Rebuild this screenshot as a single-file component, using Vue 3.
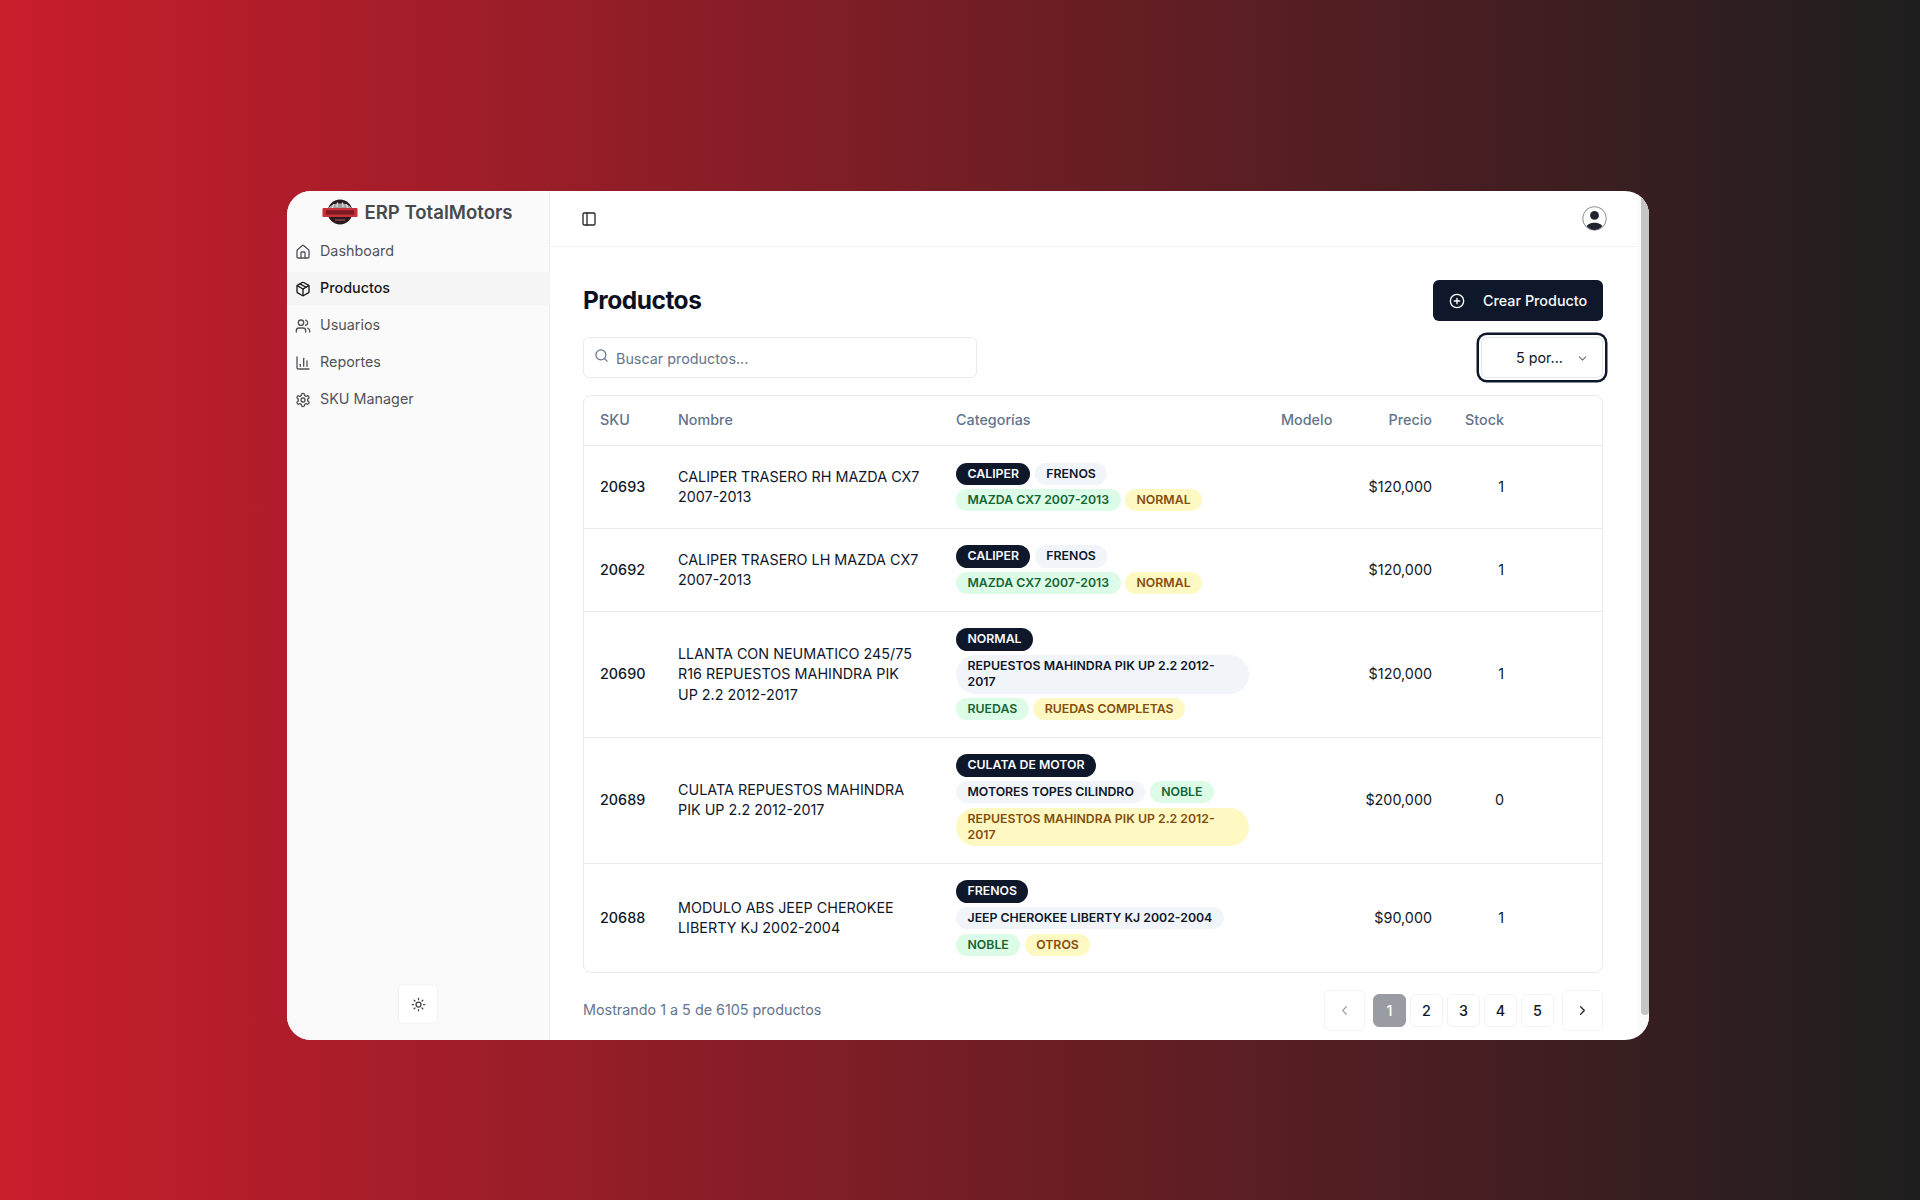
<template>
  <div class="page">
    <div class="window">
      <aside class="sidebar">
        <div class="brand">
          <svg class="logo" viewBox="0 0 36 26" width="36" height="26">
            <circle cx="18" cy="13" r="12.5" fill="#2a1a1d" />
            <path d="M6 10 C8 2.5 28 2.5 30 10 Z" fill="#a2a2a2" />
            <path d="M10 9 L12 5 M15 8 L15.5 3.5 M21 8 L20.5 3.5 M26 9 L24 5" stroke="#e4e4e4" stroke-width="1.2" />
            <rect x="0.5" y="9" width="35" height="9" rx="1" fill="#c8303a" />
            <rect x="4" y="11.2" width="28" height="4.4" fill="#7d1a22" />
            <path d="M13 21 H23" stroke="#8a4a50" stroke-width="1.4" />
          </svg>
          <span>ERP TotalMotors</span>
        </div>
        <nav class="nav">
          <a v-for="item in navItems" :key="item.label" class="nav-item" :class="{ active: item.active }">
            <svg viewBox="0 0 24 24" class="nav-icon" v-html="item.icon"></svg>
            <span>{{ item.label }}</span>
          </a>
        </nav>
        <button class="theme-btn">
          <svg viewBox="0 0 24 24" width="15" height="15" class="line">
            <circle cx="12" cy="12" r="4" />
            <path d="M12 2v2M12 20v2M4.93 4.93l1.41 1.41M17.66 17.66l1.41 1.41M2 12h2M20 12h2M6.34 17.66l-1.41 1.41M19.07 4.93l-1.41 1.41" />
          </svg>
        </button>
      </aside>

      <main class="main">
        <header class="topbar">
          <svg viewBox="0 0 24 24" width="16" height="16" class="line dark">
            <rect x="3" y="3" width="18" height="18" rx="2" />
            <path d="M9 3v18" />
          </svg>
          <svg viewBox="0 0 24 24" width="25" height="25" class="avatar">
            <circle cx="12" cy="12" r="11.2" fill="#fff" stroke="#8b8f96" stroke-width="1" />
            <circle cx="12" cy="9" r="4.2" fill="#1f2430" />
            <path d="M4.6 19.5 C6 14.8 18 14.8 19.4 19.5 C17.5 21.8 15 23 12 23 C9 23 6.5 21.8 4.6 19.5 Z" fill="#1f2430" />
          </svg>
        </header>

        <section class="content">
          <div class="title-row">
            <h1>Productos</h1>
            <button class="create-btn">
              <svg viewBox="0 0 24 24" width="16" height="16" class="line white">
                <circle cx="12" cy="12" r="10" />
                <path d="M8 12h8M12 8v8" />
              </svg>
              <span>Crear Producto</span>
            </button>
          </div>

          <div class="filter-row">
            <label class="search">
              <svg viewBox="0 0 24 24" width="15" height="15" class="line muted">
                <circle cx="11" cy="11" r="8" />
                <path d="m21 21-4.3-4.3" />
              </svg>
              <span>Buscar productos...</span>
            </label>
            <div class="select">
              <span>5 por...</span>
              <svg viewBox="0 0 24 24" width="13" height="13" class="line muted">
                <path d="m6 9 6 6 6-6" />
              </svg>
            </div>
          </div>

          <div class="table-wrap">
            <table>
              <colgroup>
                <col style="width: 78px" />
                <col style="width: 278px" />
                <col style="width: 325px" />
                <col style="width: 83px" />
                <col style="width: 100px" />
                <col style="width: 72px" />
                <col />
              </colgroup>
              <thead>
                <tr>
                  <th>SKU</th>
                  <th>Nombre</th>
                  <th>Categorías</th>
                  <th>Modelo</th>
                  <th class="right">Precio</th>
                  <th class="right">Stock</th>
                  <th></th>
                </tr>
              </thead>
              <tbody>
                <tr v-for="p in products" :key="p.sku">
                  <td class="sku">{{ p.sku }}</td>
                  <td class="name">{{ p.name }}</td>
                  <td>
                    <div class="badges">
                      <span v-for="(b, i) in p.tags" :key="i" class="badge" :class="badgeTone[i]">{{ b }}</span>
                    </div>
                  </td>
                  <td></td>
                  <td class="right">{{ p.price }}</td>
                  <td class="right">{{ p.stock }}</td>
                  <td></td>
                </tr>
              </tbody>
            </table>
          </div>

          <div class="footer-row">
            <span class="count">Mostrando 1 a 5 de 6105 productos</span>
            <div class="pager">
              <button class="arrow off">
                <svg viewBox="0 0 24 24" width="15" height="15" class="line"><path d="m15 18-6-6 6-6" /></svg>
              </button>
              <div class="pages">
                <button v-for="n in 5" :key="n" class="page-num" :class="{ current: n === 1 }">{{ n }}</button>
              </div>
              <button class="arrow">
                <svg viewBox="0 0 24 24" width="15" height="15" class="line dark"><path d="m9 18 6-6-6-6" /></svg>
              </button>
            </div>
          </div>
        </section>
      </main>

      <div class="scrollbar"><div class="thumb"></div></div>
    </div>
  </div>
</template>

<script setup>
const navItems = [
  {
    label: 'Dashboard',
    icon: '<path d="M3 10a2 2 0 0 1 .7-1.5l7-6a2 2 0 0 1 2.6 0l7 6A2 2 0 0 1 21 10v9a2 2 0 0 1-2 2H5a2 2 0 0 1-2-2z"/><path d="M15 21v-8a1 1 0 0 0-1-1h-4a1 1 0 0 0-1 1v8"/>'
  },
  {
    label: 'Productos',
    active: true,
    icon: '<path d="M11 21.7a2 2 0 0 0 2 0l7-4A2 2 0 0 0 21 16V8a2 2 0 0 0-1-1.7l-7-4a2 2 0 0 0-2 0l-7 4A2 2 0 0 0 3 8v8a2 2 0 0 0 1 1.7z"/><path d="M12 22V12"/><path d="M3.3 7 12 12l8.7-5"/><path d="m7.5 4.3 9 5.1"/>'
  },
  {
    label: 'Usuarios',
    icon: '<path d="M16 21v-2a4 4 0 0 0-4-4H6a4 4 0 0 0-4 4v2"/><circle cx="9" cy="7" r="4"/><path d="M22 21v-2a4 4 0 0 0-3-3.87"/><path d="M16 3.13a4 4 0 0 1 0 7.75"/>'
  },
  {
    label: 'Reportes',
    icon: '<path d="M3 3v16a2 2 0 0 0 2 2h16"/><path d="M8 17v-3"/><path d="M13 17V5"/><path d="M18 17V9"/>'
  },
  {
    label: 'SKU Manager',
    icon: '<path d="M12.22 2h-.44a2 2 0 0 0-2 2v.18a2 2 0 0 1-1 1.73l-.43.25a2 2 0 0 1-2 0l-.15-.08a2 2 0 0 0-2.73.73l-.22.38a2 2 0 0 0 .73 2.73l.15.1a2 2 0 0 1 1 1.72v.51a2 2 0 0 1-1 1.74l-.15.09a2 2 0 0 0-.73 2.73l.22.38a2 2 0 0 0 2.73.73l.15-.08a2 2 0 0 1 2 0l.43.25a2 2 0 0 1 1 1.73V20a2 2 0 0 0 2 2h.44a2 2 0 0 0 2-2v-.18a2 2 0 0 1 1-1.73l.43-.25a2 2 0 0 1 2 0l.15.08a2 2 0 0 0 2.73-.73l.22-.39a2 2 0 0 0-.73-2.73l-.15-.08a2 2 0 0 1-1-1.74v-.5a2 2 0 0 1 1-1.74l.15-.09a2 2 0 0 0 .73-2.73l-.22-.38a2 2 0 0 0-2.73-.73l-.15.08a2 2 0 0 1-2 0l-.43-.25a2 2 0 0 1-1-1.73V4a2 2 0 0 0-2-2z"/><circle cx="12" cy="12" r="3"/>'
  }
]

// order of colours is the same for every row
const badgeTone = ['dark', 'gray', 'green', 'yellow']

const products = [
  {
    sku: '20693',
    name: 'CALIPER TRASERO RH MAZDA CX7 2007-2013',
    tags: ['CALIPER', 'FRENOS', 'MAZDA CX7 2007-2013', 'NORMAL'],
    price: '$120,000',
    stock: 1
  },
  {
    sku: '20692',
    name: 'CALIPER TRASERO LH MAZDA CX7 2007-2013',
    tags: ['CALIPER', 'FRENOS', 'MAZDA CX7 2007-2013', 'NORMAL'],
    price: '$120,000',
    stock: 1
  },
  {
    sku: '20690',
    name: 'LLANTA CON NEUMATICO 245/75 R16 REPUESTOS MAHINDRA PIK UP 2.2 2012-2017',
    tags: ['NORMAL', 'REPUESTOS MAHINDRA PIK UP 2.2 2012-2017', 'RUEDAS', 'RUEDAS COMPLETAS'],
    price: '$120,000',
    stock: 1
  },
  {
    sku: '20689',
    name: 'CULATA REPUESTOS MAHINDRA PIK UP 2.2 2012-2017',
    tags: ['CULATA DE MOTOR', 'MOTORES TOPES CILINDRO', 'NOBLE', 'REPUESTOS MAHINDRA PIK UP 2.2 2012-2017'],
    price: '$200,000',
    stock: 0
  },
  {
    sku: '20688',
    name: 'MODULO ABS JEEP CHEROKEE LIBERTY KJ 2002-2004',
    tags: ['FRENOS', 'JEEP CHEROKEE LIBERTY KJ 2002-2004', 'NOBLE', 'OTROS'],
    price: '$90,000',
    stock: 1
  }
]
</script>

<style scoped>
.page {
  box-sizing: border-box;
  width: 1920px;
  height: 1200px;
  padding: 191px 0 0 287px;
  background: linear-gradient(to right, #c91d2c 0%, #1e1e1e 100%);
  font-family: Inter, "Liberation Sans", sans-serif;
  font-size: 14.35px;
  line-height: 20.4px;
  color: #0f172a;
  overflow: hidden;
}

.window {
  display: flex;
  width: 1362px;
  height: 849px;
  border-radius: 24px;
  overflow: hidden;
  background: #fff;
}

/* sidebar */
.sidebar {
  box-sizing: border-box;
  flex: none;
  width: 263px;
  display: flex;
  flex-direction: column;
  background: #fafafa;
  border-right: 1px solid #f0f1f3;
}

.brand {
  display: flex;
  align-items: center;
  justify-content: center;
  gap: 6px;
  height: 42px;
  padding-right: 1px;
  font-size: 18.6px;
  font-weight: 600;
  color: #47494f;
}

.logo {
  flex: none;
}

.nav {
  display: flex;
  flex-direction: column;
  flex: 1;
}

.nav-item {
  display: flex;
  align-items: center;
  gap: 9px;
  height: 37px;
  padding-left: 8px;
  color: #52525b;
}

.nav-item.active {
  height: 33px;
  margin: 2px 0;
  background: #f5f5f6;
  color: #18181b;
  font-weight: 500;
}

.nav-icon {
  width: 16px;
  height: 16px;
  flex: none;
  fill: none;
  stroke: currentColor;
  stroke-width: 2;
  stroke-linecap: round;
  stroke-linejoin: round;
}

.theme-btn {
  align-self: center;
  display: flex;
  align-items: center;
  justify-content: center;
  width: 40px;
  height: 40px;
  margin-bottom: 16px;
  background: #fff;
  border: 1px solid #f1f2f4;
  border-radius: 6px;
}

.line {
  fill: none;
  stroke: #3f3f46;
  stroke-width: 2;
  stroke-linecap: round;
  stroke-linejoin: round;
  flex: none;
}

.line.dark {
  stroke: #27272a;
}

.line.white {
  stroke: #fff;
}

.line.muted {
  stroke: #64748b;
}

/* main */
.main {
  flex: 1;
  min-width: 0;
  display: flex;
  flex-direction: column;
}

.topbar {
  box-sizing: border-box;
  flex: none;
  display: flex;
  align-items: center;
  justify-content: space-between;
  height: 56px;
  padding: 0 30px 0 31px;
  border-bottom: 1px solid #f0f1f3;
}

.avatar {
  flex: none;
}

.content {
  padding: 33px 34px 0 33px;
}

.title-row {
  display: flex;
  align-items: center;
  justify-content: space-between;
  height: 41px;
}

h1 {
  margin: 0 0 2px;
  font-size: 24.5px;
  line-height: 32px;
  font-weight: 700;
  letter-spacing: -0.5px;
  color: #0b1120;
}

.create-btn {
  display: flex;
  align-items: center;
  gap: 18px;
  width: 170px;
  height: 41px;
  padding: 0 0 0 16px;
  border: 0;
  border-radius: 6px;
  background: #0f172a;
  color: #f8fafc;
  font: 500 14.35px Inter, sans-serif;
}

.filter-row {
  display: flex;
  align-items: center;
  justify-content: space-between;
  margin-top: 16px;
}

.search {
  box-sizing: border-box;
  display: flex;
  align-items: center;
  gap: 7px;
  width: 394px;
  height: 41px;
  padding-left: 10px;
  background: #fff;
  border: 1px solid #e8eaee;
  border-radius: 6px;
  color: #64748b;
}

.search svg {
  margin-top: -4px;
}

.search span {
  padding-top: 3px;
}

.select {
  box-sizing: border-box;
  display: flex;
  align-items: center;
  justify-content: flex-end;
  gap: 13px;
  width: 122px;
  height: 41px;
  padding: 1px 13px 0 0;
  background: #fff;
  border: 1px solid #e2e8f0;
  border-radius: 6px;
  box-shadow: 0 0 0 2px #fff, 0 0 0 4.5px #0f172a;
}

/* table */
.table-wrap {
  margin-top: 17px;
  border: 1px solid #e8eaee;
  border-radius: 8px;
}

table {
  width: 100%;
  table-layout: fixed;
  border-collapse: collapse;
}

th {
  height: 49px;
  padding: 0 16px;
  text-align: left;
  font-weight: 500;
  color: #64748b;
  border-bottom: 1px solid #e8eaee;
}

td {
  padding: 16.5px 16px;
  color: #0f172a;
  vertical-align: middle;
}

td.name {
  padding-right: 20px;
}

tbody tr + tr td {
  border-top: 1px solid #e8eaee;
}

tbody tr:last-child td {
  padding-bottom: 15.5px;
}

.right {
  text-align: right;
}

.sku {
  font-weight: 500;
}

.badges {
  display: flex;
  flex-wrap: wrap;
  gap: 4.4px;
}

.badge {
  box-sizing: border-box;
  padding: 2px 10.5px;
  font-size: 12.3px;
  line-height: 16.3px;
  font-weight: 600;
  border-radius: 999px;
  border: 1px solid transparent;
}

.badge.dark {
  background: #0f172a;
  color: #f8fafc;
}

.badge.gray {
  background: #f1f5f9;
  color: #0f172a;
}

.badge.green {
  background: #dcfce7;
  color: #166534;
}

.badge.yellow {
  background: #fef9c3;
  color: #854d0e;
}

/* footer */
.footer-row {
  display: flex;
  align-items: center;
  justify-content: space-between;
  margin-top: 17px;
}

.count {
  color: #64748b;
}

.pager {
  display: flex;
  align-items: center;
  gap: 8px;
}

.pages {
  display: flex;
  gap: 4px;
}

.arrow,
.page-num {
  display: flex;
  align-items: center;
  justify-content: center;
  padding: 0;
  background: #fff;
  border: 1px solid #f1f2f4;
  border-radius: 6px;
  color: #0f172a;
  font: 500 14.35px Inter, sans-serif;
}

.arrow {
  width: 41px;
  height: 41px;
}

.arrow.off .line {
  stroke: #a1a5ad;
}

.page-num {
  width: 33px;
  height: 33px;
}

.page-num.current {
  background: #9a9ca3;
  border-color: #9a9ca3;
  color: #fff;
}

/* scrollbar column */
.scrollbar {
  flex: none;
  box-sizing: border-box;
  width: 12px;
  padding-left: 4px;
  background: #fafafa;
}

.thumb {
  height: 824px;
  background: #c4c4c4;
  border-radius: 0 0 4px 4px;
}
</style>
